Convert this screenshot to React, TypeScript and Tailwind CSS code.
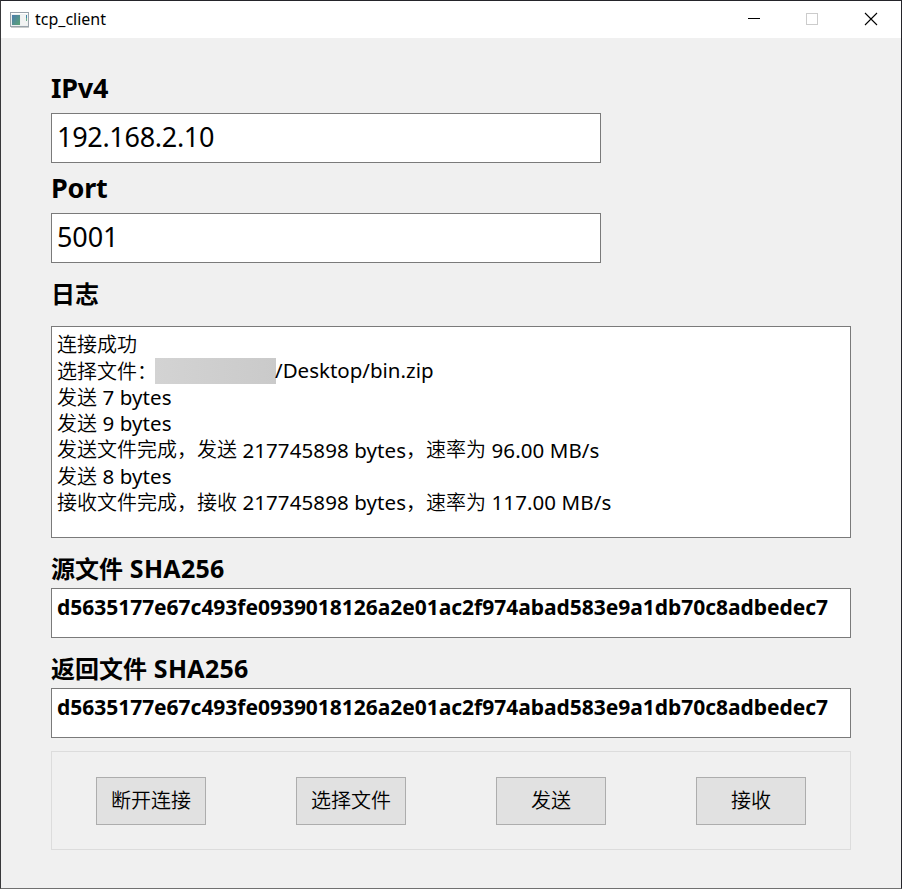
import React from "react";

const HASH = "d5635177e67c493fe0939018126a2e01ac2f974abad583e9a1db70c8adbedec7";

function TitleBar() {
  return (
    <header className="flex h-[37px] items-center justify-between bg-white">
      <div className="flex items-center">
        <svg className="ml-[9px] block" width="20" height="16" viewBox="0 0 20 16" shapeRendering="crispEdges">
          <defs>
            <linearGradient id="pane" x1="0" y1="0" x2="1" y2="1">
              <stop offset="0" stopColor="#4c7cae" />
              <stop offset="1" stopColor="#5aa474" />
            </linearGradient>
          </defs>
          <rect x="0.5" y="0.5" width="18" height="14" fill="#eef1f1" stroke="#9aa3ab" />
          <rect x="1" y="1" width="17" height="1" fill="#ffffff" />
          <rect x="2" y="3" width="8" height="10" fill="url(#pane)" />
          <rect x="11" y="3" width="6" height="10" fill="#f2f3f3" />
          <rect x="16" y="3" width="1" height="3" fill="#3f86a8" />
          <rect x="16" y="6" width="1" height="3" fill="#6bb08b" />
          <rect x="1" y="15" width="18" height="1" fill="#c9cccc" />
        </svg>
        <span className="ml-[5px] pb-[2px] text-[16px] leading-5">tcp_client</span>
      </div>
      <svg className="block" width="170" height="37" viewBox="731 1 170 37" fill="none" shapeRendering="crispEdges">
        <path d="M748 18.5h12" stroke="#000" />
        <rect x="806.5" y="13.5" width="11" height="11" stroke="#ccc" />
        <path d="M865 13l12 12M877 13l-12 12" stroke="#000" strokeWidth="1.1" shapeRendering="auto" />
      </svg>
    </header>
  );
}

function ActionButton({ children }: { children: React.ReactNode }) {
  return (
    <button className="h-12 w-[110px] border border-[#adadad] bg-[#e1e1e1] text-[20px] leading-none font-[350]">{children}</button>
  );
}

function LogLine({ children }: { children: React.ReactNode }) {
  return <div className="flex h-[26.33px] items-center font-[350] whitespace-pre">{children}</div>;
}

function Latin({ children }: { children: React.ReactNode }) {
  return <span className="pb-px text-[20.5px] font-normal tracking-[0.09px]">{children}</span>;
}

export default function App() {
  return (
    <div className="flex h-[889px] w-[902px] flex-col border border-t-[#24242a] border-r-[#24242a] border-b-[#707070] border-l-[#38383a] bg-[#f0f0f0] font-['Noto_Sans','Noto_Sans_CJK_SC',sans-serif] text-black">
      <TitleBar />
      <main className="flex flex-col pr-[50px] pl-[50px]">
        <h2 className="mt-[30px] h-[40px] text-[27px] leading-[40px] font-bold tracking-[-0.2px]">IPv4</h2>
        <div className="mt-[5px] h-[50px] w-[550px] border border-[#7a7a7a] bg-white pl-[5px] text-[27px] leading-[45px] tracking-[-0.3px]">192.168.2.10</div>
        <h2 className="mt-[5px] h-[40px] text-[27px] leading-[40px] font-bold tracking-[-0.2px]">Port</h2>
        <div className="mt-[5px] h-[50px] w-[550px] border border-[#7a7a7a] bg-white pl-[5px] text-[27px] leading-[45px] tracking-[-0.1px]">5001</div>
        <h2 className="mt-[11px] h-[40px] text-[24px] leading-[40px] font-bold">日志</h2>
        <div className="mt-[12px] h-[212px] border border-[#7a7a7a] bg-white pt-[5px] pl-[5px] text-[20px]">
          <LogLine>连接成功</LogLine>
          <LogLine>
            <span className="w-[98px]">选择文件：</span>
            <span className="h-[26px] w-[121px] bg-linear-to-r from-[#d3d3d3] to-[#cacaca]" />
            <span className="-ml-px pb-[2px] text-[20.5px] font-normal">/Desktop/bin.zip</span>
          </LogLine>
          <LogLine>发送<Latin> 7 bytes</Latin></LogLine>
          <LogLine>发送<Latin> 9 bytes</Latin></LogLine>
          <LogLine>发送文件完成，发送<Latin> 217745898 bytes</Latin>，速率为<Latin> 96.00 MB/s</Latin></LogLine>
          <LogLine>发送<Latin> 8 bytes</Latin></LogLine>
          <LogLine>接收文件完成，接收<Latin> 217745898 bytes</Latin>，速率为<Latin> 117.00 MB/s</Latin></LogLine>
        </div>
        <h2 className="mt-[11px] h-[39px] text-[24px] leading-[38px] font-bold">源文件<span className="text-[25px] tracking-[0.3px]"> SHA256</span></h2>
        <div className="h-[50px] border border-[#7a7a7a] bg-white pl-[5px] text-[21px] leading-[36px] font-bold tracking-[-0.03px]">{HASH}</div>
        <h2 className="mt-[11px] h-[39px] text-[24px] leading-[38px] font-bold">返回文件<span className="text-[25px] tracking-[0.3px]"> SHA256</span></h2>
        <div className="h-[50px] border border-[#7a7a7a] bg-white pl-[5px] text-[21px] leading-[36px] font-bold tracking-[-0.03px]">{HASH}</div>
        <div className="mt-[13px] flex h-[99px] items-center justify-between border border-[#dcdcdc] px-[44px]">
          <ActionButton>断开连接</ActionButton>
          <ActionButton>选择文件</ActionButton>
          <ActionButton>发送</ActionButton>
          <ActionButton>接收</ActionButton>
        </div>
      </main>
    </div>
  );
}
